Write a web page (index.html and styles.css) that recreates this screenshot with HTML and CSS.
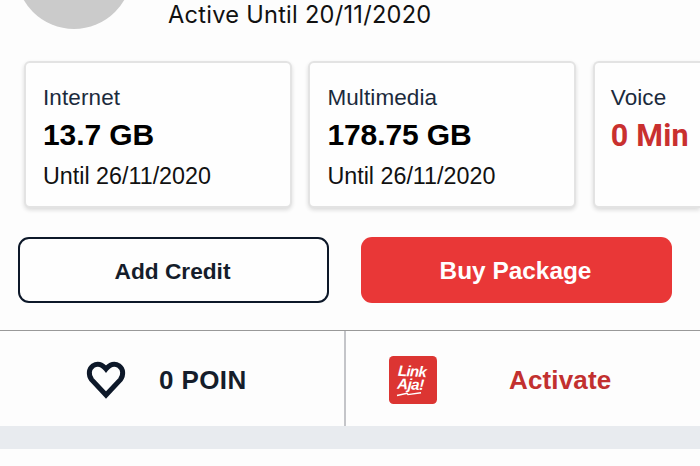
FILE: index.html
```html
<!DOCTYPE html>
<html lang="en">
    <head>
        <meta charset="UTF-8" />
        <meta name="viewport" content="width=device-width, initial-scale=1.0" />
        <title>My Account</title>
        <link rel="stylesheet" href="styles.css">
    </head>
    <body>
        <div class="profile">
            <div class="avatar"></div>
            <p class="active-until">Active Until 20/11/2020</p>
        </div>
        <div class="quota-list">
            <div class="quota">
                <p class="quota-name">Internet</p>
                <p class="quota-value">13.7 GB</p>
                <p class="quota-until">Until 26/11/2020</p>
            </div>
            <div class="quota">
                <p class="quota-name">Multimedia</p>
                <p class="quota-value">178.75 GB</p>
                <p class="quota-until">Until 26/11/2020</p>
            </div>
            <div class="quota last">
                <p class="quota-name">Voice</p>
                <p class="quota-value empty">0 Min</p>
            </div>
        </div>
        <div class="actions">
            <button class="btn outline">Add Credit</button>
            <button class="btn primary">Buy Package</button>
        </div>
        <div class="rewards">
            <div class="points">
                <svg class="heart" viewBox="0 0 40 40">
                    <path d="M20 35 L5.6 19.6 C2.2 15.2 2.6 9 7 5.8 C11.2 2.9 16 4 20 9 C24 4 28.8 2.9 33 5.8 C37.4 9 37.8 15.2 34.4 19.6 Z" fill="none" stroke="#0d1829" stroke-width="5" />
                </svg>
                <span>0 POIN</span>
            </div>
            <div class="wallet">
                <svg class="linkaja" viewBox="0 0 48 48">
                    <rect width="48" height="48" rx="4.5" fill="#dc3532" />
                    <g class="linkaja-text" transform="rotate(3 24 24)">
                        <text x="8.5" y="20.5" textLength="29">Link</text>
                        <text x="8.5" y="33.5" textLength="27">Aja!</text>
                    </g>
                    <path d="M8 39.5 L18 37.2 L19 38.6 L32 36.8" fill="none" stroke="#fff" stroke-width="1.4" />
                </svg>
                <span>Activate</span>
            </div>
        </div>
        <div class="separator"></div>
    </body>
</html>
```
FILE: styles.css
```css
body {
    font-family: "Liberation Sans", Arial, sans-serif;
    background-color: #fdfdfd;
    margin: 0;
    height: 466px;
    overflow: hidden;
}
p {
    margin: 0;
}
.profile {
    display: flex;
    height: 61px;
}
.avatar {
    width: 116px;
    height: 116px;
    margin: -87px 36px 0 16px;
    border-radius: 50%;
    background-color: #cbcbcb;
    flex-shrink: 0;
}
.active-until {
    font-family: Inter, sans-serif;
    font-size: 23.6px;
    line-height: 30px;
    letter-spacing: 0.25px;
    font-feature-settings: "calt" 0;
    color: #111;
}
.quota-list {
    display: flex;
    gap: 16.4px;
    padding-left: 24px;
}
.quota {
    box-sizing: border-box;
    width: 268px;
    height: 147px;
    padding: 23px 17px 0;
    flex-shrink: 0;
    border: 2px solid #e3e3e3;
    border-radius: 6px;
    background-color: #fefefe;
    box-shadow: 0 2px 4px rgba(0, 0, 0, 0.14);
}
/* last card is cut off by the screen edge */
.quota.last {
    flex: 1;
    width: auto;
    padding: 23px 0 0 16px;
    border-right: none;
    border-radius: 6px 0 0 6px;
    white-space: nowrap;
    min-width: 0;
}
.quota-name {
    font-size: 22.5px;
    line-height: 24px;
    letter-spacing: 0.1px;
    color: #1b2a3c;
}
.quota-value {
    margin-top: 8px;
    font-size: 30px;
    line-height: 34px;
    letter-spacing: -0.1px;
    font-weight: bold;
    color: #000;
}
.quota-value.empty {
    font-family: Roboto, sans-serif;
    font-size: 30.5px;
    line-height: 36px;
    letter-spacing: 0.2px;
    color: #c9302f;
}
.quota-until {
    margin-top: 11px;
    font-size: 23.3px;
    line-height: 26px;
    color: #111;
}
.actions {
    display: flex;
    justify-content: space-between;
    padding: 29px 28px 27px 18px;
}
.btn {
    box-sizing: border-box;
    width: 311px;
    height: 66px;
    padding: 2px 2px 0 0;
    border-radius: 11px;
    font-family: inherit;
    font-weight: bold;
}
.outline {
    border: 2px solid #0d1829;
    background-color: #fefefe;
    color: #151d2b;
    font-size: 22.7px;
}
.primary {
    border: none;
    background-color: #e93737;
    color: #fff;
    font-size: 24.4px;
}
.rewards {
    display: flex;
    height: 95px;
    border-top: 1px solid #999;
    font-size: 26px;
    font-weight: bold;
}
.points,
.wallet {
    display: flex;
    align-items: center;
    padding-top: 3px;
}
.points {
    box-sizing: border-box;
    width: 346px;
    padding-left: 86px;
    gap: 33px;
    border-right: 2px solid #c4c5c9;
    color: #151d2b;
    letter-spacing: 0.4px;
}
.heart {
    width: 40px;
    height: 40px;
}
.wallet {
    padding-left: 43px;
    gap: 72px;
    color: #c2302f;
    letter-spacing: 0.15px;
}
.linkaja {
    width: 48px;
    height: 48px;
}
.linkaja-text {
    font-size: 15px;
    font-style: italic;
    letter-spacing: 0;
    fill: #fff;
}
.separator {
    height: 23px;
    background-color: #e8ebef;
}
```
